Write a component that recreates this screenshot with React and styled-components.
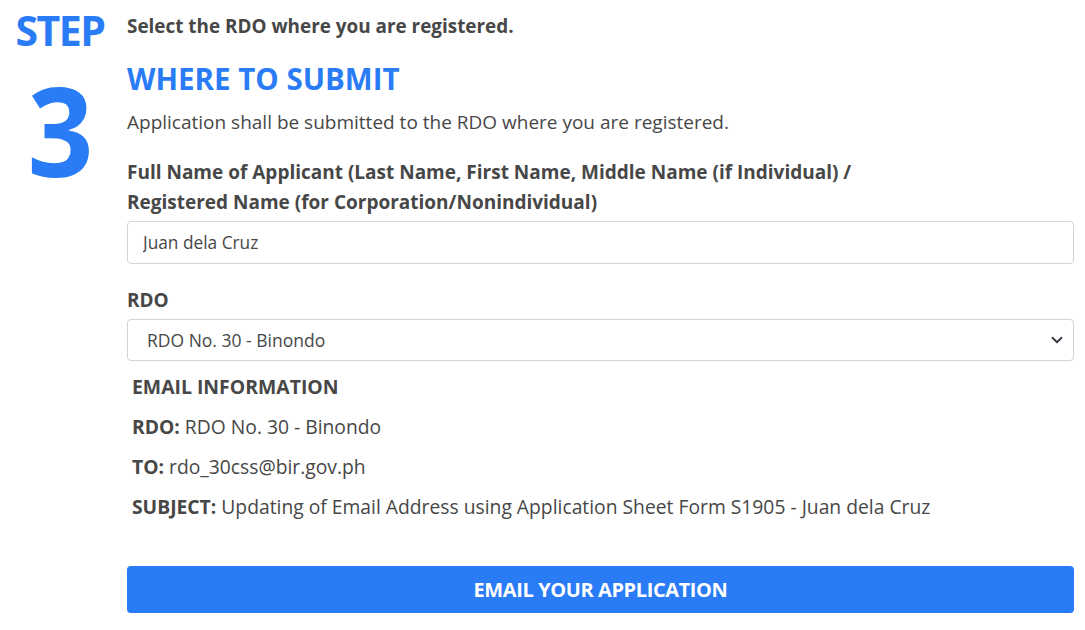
import React from 'react';
import styled, { createGlobalStyle } from 'styled-components';

const GlobalStyle = createGlobalStyle`
  html, body {
    margin: 0;
    padding: 0;
    background: #ffffff;
  }
  body {
    font-family: 'Open Sans', 'Noto Sans', sans-serif;
    color: #474747;
  }
`;

const blue = '#2a7bf6';

const Page = styled.div`
  display: flex;
  width: 1085px;
  height: 630px;
  overflow: hidden;
`;

const StepColumn = styled.div`
  width: 127px;
  flex-shrink: 0;
  display: flex;
  flex-direction: column;
  align-items: center;
  color: ${blue};
  font-weight: 700;
  padding-right: 7px;
  box-sizing: border-box;
`;

const StepWord = styled.div`
  font-size: 41px;
  line-height: 1;
  margin-top: 10px;
  letter-spacing: -1.5px;
`;

const StepNumber = styled.div`
  font-size: 124px;
  line-height: 96px;
  margin-top: 30px;
  transform: scaleX(0.93);
`;

const Main = styled.div`
  flex: 1;
  padding-right: 11px;
  padding-top: 12px;
`;

const Intro = styled.div`
  font-size: 18.9px;
  font-weight: 700;
  line-height: 28px;
`;

const Heading = styled.h2`
  margin: 20px 0 0;
  color: ${blue};
  font-size: 29.5px;
  font-weight: 700;
  line-height: 38px;
`;

const Lead = styled.p`
  margin: 10px 0 0;
  font-size: 19px;
  line-height: 28px;
`;

const Label = styled.label`
  display: block;
  margin-top: ${({ $top }) => $top}px;
  font-size: 19px;
  font-weight: 700;
  line-height: 30px;
`;

const Input = styled.input`
  display: block;
  box-sizing: border-box;
  width: 100%;
  height: 43px;
  margin-top: 4px;
  padding: 0 15px;
  border: 1px solid #ced4da;
  border-radius: 4px;
  font-family: inherit;
  font-size: 17.3px;
  color: #474747;
  background: #fff;
  outline: none;
`;

const SelectWrap = styled.div`
  position: relative;
  margin-top: 4px;
`;

const Select = styled.select`
  display: block;
  box-sizing: border-box;
  width: 100%;
  height: 42px;
  padding: 0 40px 0 19px;
  border: 1px solid #ced4da;
  border-radius: 4px;
  font-family: inherit;
  font-size: 17.5px;
  color: #474747;
  background: #fff;
  appearance: none;
  outline: none;
`;

const Chevron = styled.svg`
  position: absolute;
  right: 11px;
  top: 15px;
  pointer-events: none;
`;

const InfoBlock = styled.div`
  padding-left: 5px;
  margin-top: 12px;
`;

const InfoTitle = styled.div`
  font-size: 19.4px;
  font-weight: 700;
  line-height: 28px;
`;

const InfoRow = styled.div`
  margin-top: 12px;
  font-size: 19.3px;
  line-height: 28px;

  b {
    font-weight: 700;
  }
`;

const SubmitButton = styled.button`
  display: block;
  width: 100%;
  height: 47px;
  margin-top: 45px;
  border: none;
  border-radius: 4px;
  background: ${blue};
  color: #fff;
  font-family: inherit;
  font-size: 20px;
  font-weight: 700;
  letter-spacing: -0.4px;
  cursor: pointer;
`;

export default function App() {
  return (
    <>
      <GlobalStyle />
      <Page>
        <StepColumn>
          <StepWord>STEP</StepWord>
          <StepNumber>3</StepNumber>
        </StepColumn>
        <Main>
          <Intro>Select the RDO where you are registered.</Intro>
          <Heading>WHERE TO SUBMIT</Heading>
          <Lead>Application shall be submitted to the RDO where you are registered.</Lead>
          <Label $top={21}>
            Full Name of Applicant (Last Name, First Name, Middle Name (if Individual) /
            <br />
            Registered Name (for Corporation/Nonindividual)
          </Label>
          <Input defaultValue="Juan dela Cruz" />
          <Label $top={21}>RDO</Label>
          <SelectWrap>
            <Select defaultValue="30">
              <option value="30">RDO No. 30 - Binondo</option>
            </Select>
            <Chevron width="12" height="12" viewBox="0 0 16 16">
              <path d="M2 5l6 6 6-6" fill="none" stroke="#343a40" strokeWidth="2.4" strokeLinecap="round" strokeLinejoin="round" />
            </Chevron>
          </SelectWrap>
          <InfoBlock>
            <InfoTitle>EMAIL INFORMATION</InfoTitle>
            <InfoRow><b>RDO:</b> RDO No. 30 - Binondo</InfoRow>
            <InfoRow><b>TO:</b> rdo_30css@bir.gov.ph</InfoRow>
            <InfoRow><b>SUBJECT:</b> Updating of Email Address using Application Sheet Form S1905 - Juan dela Cruz</InfoRow>
          </InfoBlock>
          <SubmitButton>EMAIL YOUR APPLICATION</SubmitButton>
        </Main>
      </Page>
    </>
  );
}
